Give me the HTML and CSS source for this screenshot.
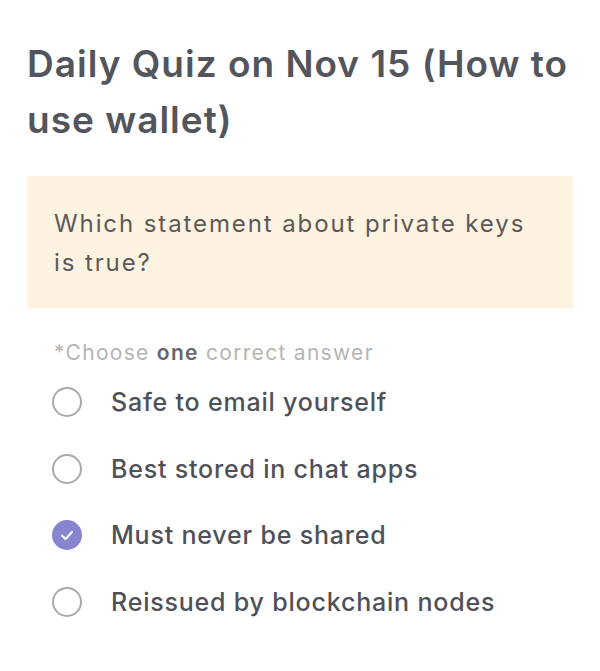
FILE: index.html
```html
<!DOCTYPE html>
<html>
<head>
<meta charset="utf-8">
<link rel="stylesheet" href="styles.css">
</head>
<body>
<main class="quiz">
  <h1 class="title">Daily Quiz on Nov 15 (How to use wallet)</h1>
  <div class="question">Which statement about private keys is true?</div>
  <p class="hint">*Choose <b>one</b> correct answer</p>
  <ul class="options">
    <li class="option"><span class="radio"></span><span class="label">Safe to email yourself</span></li>
    <li class="option"><span class="radio"></span><span class="label">Best stored in chat apps</span></li>
    <li class="option"><span class="radio checked"><svg viewBox="0 0 30 30" width="30" height="30"><path d="M10 15.5l3.5 3.5 6.5-7" fill="none" stroke="#fff" stroke-width="2" stroke-linecap="round" stroke-linejoin="round"/></svg></span><span class="label">Must never be shared</span></li>
    <li class="option"><span class="radio"></span><span class="label">Reissued by blockchain nodes</span></li>
  </ul>
</main>
</body>
</html>
```
FILE: styles.css
```css
html, body {
  margin: 0;
  padding: 0;
  background: #ffffff;
}
body {
  font-family: Inter, "Noto Sans", sans-serif;
}
.quiz {
  padding: 36px 27px 0 27px;
}
.title {
  margin: 0;
  font-size: 37px;
  line-height: 56px;
  font-weight: 600;
  color: #53555c;
  letter-spacing: 1px;
}
.question {
  margin-top: 28px;
  background: #fef2e0;
  border-radius: 2px;
  padding: 28px 40px 26px 27px;
  font-size: 24px;
  line-height: 39px;
  color: #5b5a5a;
  font-weight: 400;
  letter-spacing: 1.9px;
}
.hint {
  margin: 31px 0 0 27px;
  font-size: 21px;
  line-height: 28px;
  color: #b5b5b5;
  letter-spacing: 1.3px;
}
.hint b {
  color: #65666b;
  font-weight: 600;
}
.options {
  list-style: none;
  margin: 20px 0 0 0;
  padding: 0;
  display: flex;
  flex-direction: column;
  gap: 36.7px;
}
.option {
  display: flex;
  align-items: center;
  gap: 29px;
  padding-left: 25px;
  height: 30px;
}
.radio {
  width: 26px;
  height: 26px;
  border: 2px solid #a9a9a9;
  border-radius: 50%;
  flex: none;
  display: flex;
  align-items: center;
  justify-content: center;
}
.radio.checked {
  border-color: #8984d0;
  background: #8984d0;
}
.radio svg {
  display: block;
  flex: none;
}
.label {
  font-size: 25px;
  color: #4f5158;
  font-weight: 500;
  letter-spacing: 0.8px;
}
```
